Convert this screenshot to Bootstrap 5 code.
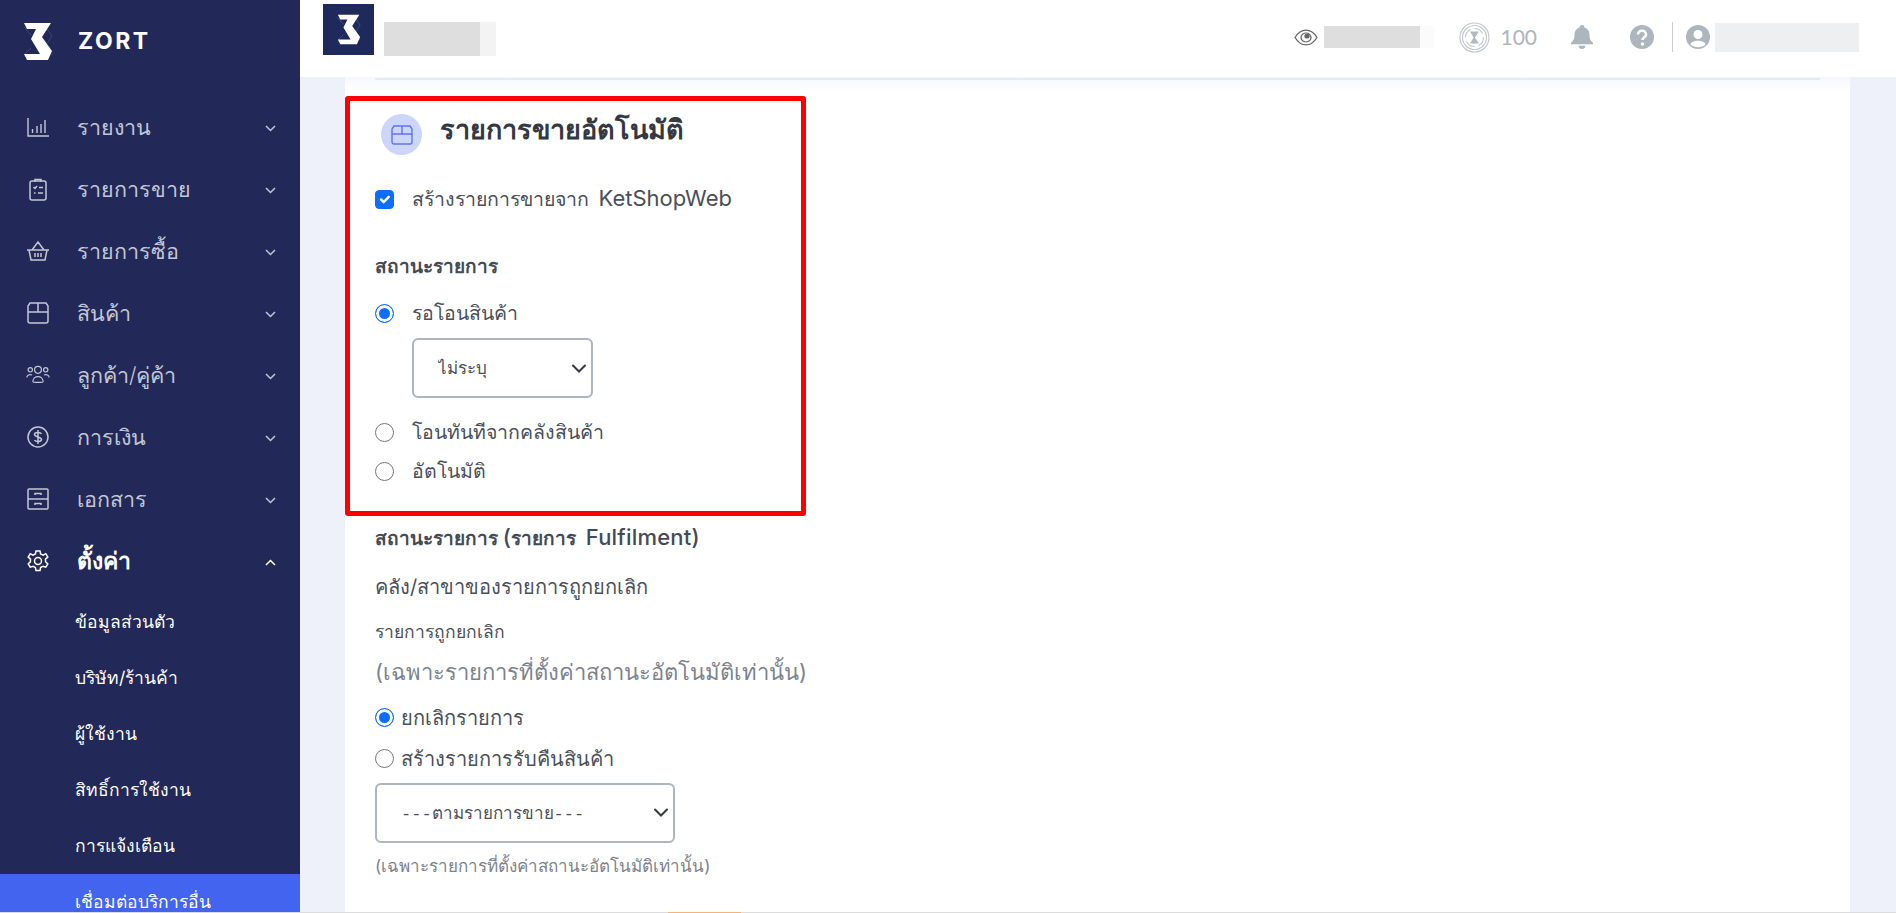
<!DOCTYPE html>
<html lang="th">
<head>
<meta charset="utf-8">
<title>ZORT</title>
<link href="https://cdn.jsdelivr.net/npm/bootstrap@5.3.0/dist/css/bootstrap.min.css" rel="stylesheet">
<style>
html,body{height:100%;overflow:hidden}
body{background:#eef1f9;font-family:"Inter","Noto Sans",sans-serif;color:#3e4450;font-size:19px}
.shell{height:912px}
.side{width:300px;background:#222858;color:#c3c7d4;flex:none;overflow:hidden;height:912px}
.brand{height:77px;padding:6px 0 0 23px;gap:25px;flex:none}
.brand-name{font-family:"Inter",sans-serif;font-weight:700;font-size:23px;letter-spacing:2.5px;color:#fff}
.menu-list{margin-top:19px;flex:none}
.menu-row{height:62px;padding:0 24px 0 26px;color:#c3c7d4;font-size:21.5px;font-weight:300;text-decoration:none}
.menu-row svg.mi{width:24px;height:24px;flex:none;margin-right:27px}
.menu-row .chev{margin:3px 0 0 auto;width:11px;height:7px}
.menu-row.open{color:#fff;font-weight:600;font-size:23px;margin-bottom:2px}
.sub-row{height:56px;padding-left:75px;color:#fff;font-size:17.5px;text-decoration:none;display:flex;align-items:center}
.sub-row.cur{background:#4364ef}
.main-col{min-width:0}
.topbar{height:77px;background:#fff;padding-left:23px;padding-right:37px;flex:none}
.mini-logo{width:51px;height:51px;background:#1f2a5c;margin-top:-19px;flex:none}
.blur-a{width:96px;height:34px;background:#dedede;margin-left:10px;box-shadow:16px 0 0 #f3f3f3}
.top-r{color:#adb5bd;font-family:"Lato",sans-serif;font-size:21px;padding-bottom:3px}
.blur-b{width:96px;height:22px;background:#dedede;margin-left:6px;margin-right:39px;box-shadow:14px 0 0 #fbfbfb}
.blur-c{width:144px;height:29px;background:#eeeff0;margin-left:5px}
.vbar{width:1px;height:30px;background:#c9ccd1;margin:0 13px 0 18px}
.sheet{margin:0 46px 0 45px;background:linear-gradient(#f6f7fd,#fff 14px);flex:1;padding:0 0 0 30px;overflow:hidden}
.top-rule{height:2px;background:#e6e8f2;margin:1px 30px 0 0}
.hl-box{border:5px solid #f00;border-radius:3px;width:461px;height:420px;margin:16px 0 0 -30px;padding:13px 0 0 25px;background:#fff}
.ico-dot{width:41px;height:41px;background:#ccd6fb;border-radius:50%;margin:0 18px 0 6px;flex:none}
.ttl{font-size:27px;font-weight:700;color:#333842;line-height:1;padding-bottom:10px}
.form-check-input.chk{width:19px;height:19px;margin:0 18px 0 0;flex:none;border-color:#777;border-radius:4px}
.form-check-input.chk:checked{border-color:#0d6efd}
.form-check-input.chk-radio{border-radius:50%}
.form-check-input.chk-radio:checked{background-image:none;background-color:#0d6efd;box-shadow:inset 0 0 0 3px #fff}
.form-check-input.tight{margin-right:7px}
.lbl{font-size:19.5px;color:#4a4f59}
.lbl-w{font-size:20px}
.lat{font-size:22px;line-height:1;margin-left:4px}
.lat-p{font-size:22px;line-height:1;font-weight:500}
.sect{font-size:19px;font-weight:600;color:#454a55}
.sect .lat{font-weight:500;margin-left:5px;letter-spacing:.2px}
.sel{font-size:17px;height:60px;border:2px solid #adb5bd;border-radius:6px;padding:4px 0 0 24px;color:#4a4f59;background-color:#fff;font-family:"Liberation Mono",monospace;background-image:url("data:image/svg+xml,%3csvg xmlns='http://www.w3.org/2000/svg' viewBox='0 0 14 9'%3e%3cpath fill='none' stroke='%23343a40' stroke-width='2' stroke-linecap='round' d='M1 1.500l6 6 6-6'/%3e%3c/svg%3e");background-position:right 5px center;background-size:14px 9px}
.sel-a{width:181px;margin:0 0 0 37px}
.sel-b{width:300px}
.gr-lg{font-size:22px;color:#7c828c}
.gr-sm{font-size:17px;color:#7c828c}
.dk{color:#4a4f59;font-size:17.500px}
.page-strip{height:1px;background:#dcdcdc}
.strip-hot{width:73px;height:1px;background:#f5b57a;margin-left:668px}
</style>
</head>
<body>
<div class="d-flex shell">
  <nav class="side d-flex flex-column">
    <div class="brand d-flex align-items-center">
      <svg width="30" height="39" viewBox="0 0 30 39"><path d="M21 2l8 12-6 9 6 10M8 26l-7 7M8 13L1 5" stroke="#3c4477" fill="none"/><path d="M1 1h27l-9 14 10 14-4 9H4l-3-6h16l-9-15 5-10H4z" fill="#fff"/></svg>
      <span class="brand-name">ZORT</span>
    </div>
    <div class="menu-list">
      <a class="menu-row d-flex align-items-center" href="#"><svg class="mi" viewBox="0 0 24 24" fill="none" stroke="#c3c7d4" stroke-width="1.4"><path d="M2 3v18h21M6.500 18v-4M11 18v-7M15 18v-9M19 18V5"/></svg>รายงาน<svg class="chev" viewBox="0 0 11 7" fill="none" stroke="#c3c7d4" stroke-width="1.5"><path d="M1 1l4.500 4.500L10 1"/></svg></a>
      <a class="menu-row d-flex align-items-center" href="#"><svg class="mi" viewBox="0 0 24 24" fill="none" stroke="#c3c7d4" stroke-width="1.5"><rect x="4" y="4" width="16" height="19" rx="2"/><path d="M9 5V2.500h6V5M7.500 10l1.500 1.500 2-2.500M13 10.500h4M8 16h1.500M12 16h5"/></svg>รายการขาย<svg class="chev" viewBox="0 0 11 7" fill="none" stroke="#c3c7d4" stroke-width="1.5"><path d="M1 1l4.500 4.500L10 1"/></svg></a>
      <a class="menu-row d-flex align-items-center" href="#"><svg class="mi" viewBox="0 0 24 24" fill="none" stroke="#c3c7d4" stroke-width="1.5"><path d="M1 11h22M3 11l2 10h14l2-10M6 11l6-8 6 8M9 14v4M12 14v4M15 14v4"/></svg>รายการซื้อ<svg class="chev" viewBox="0 0 11 7" fill="none" stroke="#c3c7d4" stroke-width="1.5"><path d="M1 1l4.500 4.500L10 1"/></svg></a>
      <a class="menu-row d-flex align-items-center" href="#"><svg class="mi" viewBox="0 0 24 24" fill="none" stroke="#c3c7d4" stroke-width="1.500"><path d="M2 11V5l2-3h16l2 3v15a2 2 0 0 1-2 2H4a2 2 0 0 1-2-2zM2 11h20M12 2v9"/></svg>สินค้า<svg class="chev" viewBox="0 0 11 7" fill="none" stroke="#c3c7d4" stroke-width="1.5"><path d="M1 1l4.500 4.500L10 1"/></svg></a>
      <a class="menu-row d-flex align-items-center" href="#"><svg class="mi" viewBox="0 0 28 24" fill="none" stroke="#c3c7d4" stroke-width="1.4"><circle cx="14" cy="6" r="4"/><circle cx="5" cy="6" r="2.500"/><circle cx="23" cy="6" r="2.500"/><path d="M8 20c0-8 12-8 12 0 0 1-12 1-12 0zM1 15c0-3 3-4 6-3M27 15c0-3-3-4-6-3"/></svg>ลูกค้า/คู่ค้า<svg class="chev" viewBox="0 0 11 7" fill="none" stroke="#c3c7d4" stroke-width="1.5"><path d="M1 1l4.500 4.500L10 1"/></svg></a>
      <a class="menu-row d-flex align-items-center" href="#"><svg class="mi" viewBox="0 0 24 24" fill="none" stroke="#c3c7d4" stroke-width="1.500"><circle cx="12" cy="12" r="10"/><path d="M15.500 9c-1-2-7-2-7 .5s7 2.500 7 5-6 2.500-7 .5M12 5v14"/></svg>การเงิน<svg class="chev" viewBox="0 0 11 7" fill="none" stroke="#c3c7d4" stroke-width="1.5"><path d="M1 1l4.500 4.500L10 1"/></svg></a>
      <a class="menu-row d-flex align-items-center" href="#"><svg class="mi" viewBox="0 0 24 24" fill="none" stroke="#c3c7d4" stroke-width="1.500"><rect x="2" y="2" width="20" height="20" rx="1"/><path d="M2 12h20M9 8V6.500h6V8M9 18v-1.500h6V18"/></svg>เอกสาร<svg class="chev" viewBox="0 0 11 7" fill="none" stroke="#c3c7d4" stroke-width="1.5"><path d="M1 1l4.500 4.500L10 1"/></svg></a>
      <a class="menu-row open d-flex align-items-center" href="#"><svg class="mi" viewBox="0 0 24 24" fill="none" stroke="#fff" stroke-width="1.500"><circle cx="12" cy="12" r="3.500"/><path d="M10 2h4l.6 3 2.500 1.200 2.700-1.500 2 3.400-2.300 2 .1 2.800 2.200 1.900-2 3.400-2.800-1-2.400 1.400-.6 3h-4l-.6-3-2.400-1.400-2.800 1-2-3.400 2.200-1.900.1-2.800-2.300-2 2-3.400 2.700 1.500L9.400 5z"/></svg>ตั้งค่า<svg class="chev" viewBox="0 0 11 7" fill="none" stroke="#fff" stroke-width="1.500"><path d="M1 6l4.500-4.500L10 6"/></svg></a>
      <a class="sub-row" href="#">ข้อมูลส่วนตัว</a>
      <a class="sub-row" href="#">บริษัท/ร้านค้า</a>
      <a class="sub-row" href="#">ผู้ใช้งาน</a>
      <a class="sub-row" href="#">สิทธิ์การใช้งาน</a>
      <a class="sub-row" href="#">การแจ้งเตือน</a>
      <a class="sub-row cur" href="#">เชื่อมต่อบริการอื่น</a>
    </div>
  </nav>
  <div class="main-col flex-grow-1 d-flex flex-column">
    <header class="topbar d-flex align-items-center">
      <div class="mini-logo d-flex align-items-center justify-content-center">
        <svg width="24" height="31" viewBox="0 0 30 39"><path d="M21 2l8 12-6 9 6 10M8 26l-7 7M8 13L1 5" stroke="#48508a" fill="none"/><path d="M1 1h27l-9 14 10 14-4 9H4l-3-6h16l-9-15 5-10H4z" fill="#fff"/></svg>
      </div>
      <div class="blur-a"></div>
      <div class="top-r ms-auto d-flex align-items-center">
        <svg width="24" height="17" viewBox="0 0 24 19" fill="none" stroke="#666" stroke-width="1.300" preserveAspectRatio="none"><path d="M1 9.500c6-11 16-11 22 0-6 11-16 11-22 0z"/><circle cx="12" cy="9.500" r="5"/><circle cx="13" cy="8" r="2" fill="#666"/></svg>
        <div class="blur-b"></div>
        <svg width="31" height="31" viewBox="0 0 31 31" fill="none" stroke="#c4c8cc" stroke-width="1.200"><circle cx="15.500" cy="15.500" r="14.500"/><circle cx="15.500" cy="15.500" r="12"/><circle cx="15.500" cy="15.500" r="9" stroke-dasharray="10 4"/><path d="M11 9.500h9l-4 6 4 6h-9l3.500-6z" fill="#b3bac1" stroke="none"/></svg>
        <span style="margin-left:10px">100</span>
        <svg style="margin-left:34px" width="22" height="25" viewBox="0 0 19 24" fill="#adb5bd" preserveAspectRatio="none"><path d="M9.500 0a2 2 0 0 1 2 2.500c3 1 4.500 3.500 4.500 7 0 4 1 5.500 3 7.500v1.500H0V17c2-2 3-3.500 3-7.500 0-3.500 1.500-6 4.500-7a2 2 0 0 1 2-2.500zM6.500 20h6a3 3 0 0 1-6 0z"/></svg>
        <svg style="margin-left:37px" width="24" height="24" viewBox="0 0 24 24"><circle cx="12" cy="12" r="12" fill="#adb5bd"/><path d="M8 9.500c0-5 8-5 8 0 0 3-3.500 2.500-3.500 5.500" fill="none" stroke="#fff" stroke-width="2.600"/><circle cx="12.500" cy="19" r="1.800" fill="#fff"/></svg>
        <div class="vbar"></div>
        <svg width="24" height="24" viewBox="0 0 24 24"><circle cx="12" cy="12" r="12" fill="#adb5bd"/><circle cx="12" cy="9.500" r="4.500" fill="#fff"/><path d="M4.500 19.500c1-5 14-5 15 0-3.500 3.500-11.500 3.500-15 0z" fill="#fff"/></svg>
        <div class="blur-c"></div>
      </div>
    </header>
    <main class="sheet">
      <div class="top-rule"></div>
      <div class="hl-box">
        <div class="d-flex align-items-center">
          <span class="ico-dot d-flex align-items-center justify-content-center"><svg width="22" height="20" viewBox="0 0 22 20" fill="none" stroke="#5f74e8" stroke-width="1.400"><path d="M1 9V4l2-3h16l2 3v13a2 2 0 0 1-2 2H3a2 2 0 0 1-2-2zM1 9h20M11 1v8"/></svg></span>
          <span class="ttl">รายการขายอัตโนมัติ</span>
        </div>
        <div class="d-flex align-items-center" style="margin-top:30px">
          <input class="form-check-input chk" type="checkbox" checked id="c1"><label class="lbl" for="c1">สร้างรายการขายจาก <span class="lat">KetShopWeb</span></label>
        </div>
        <div class="sect" style="margin-top:39px">สถานะรายการ</div>
        <div class="d-flex align-items-center" style="margin-top:17px">
          <input class="form-check-input chk chk-radio" type="radio" name="r1" checked id="r1"><label class="lbl" for="r1">รอโอนสินค้า</label>
        </div>
        <select class="form-select sel sel-a" style="margin-top:10px"><option>ไม่ระบุ</option></select>
        <div class="d-flex align-items-center" style="margin-top:20px">
          <input class="form-check-input chk chk-radio" type="radio" name="r1" id="r2"><label class="lbl" for="r2">โอนทันทีจากคลังสินค้า</label>
        </div>
        <div class="d-flex align-items-center" style="margin-top:10px">
          <input class="form-check-input chk chk-radio" type="radio" name="r1" id="r3"><label class="lbl" for="r3">อัตโนมัติ</label>
        </div>
      </div>
      <div class="sect" style="margin-top:9px">สถานะรายการ <span class="lat-p">(</span>รายการ <span class="lat">Fulfilment)</span></div>
      <div class="lbl lbl-w" style="margin-top:18px">คลัง/สาขาของรายการถูกยกเลิก</div>
      <div class="dk" style="margin-top:17px">รายการถูกยกเลิก</div>
      <div class="gr-lg" style="margin-top:11px">(เฉพาะรายการที่ตั้งค่าสถานะอัตโนมัติเท่านั้น)</div>
      <div class="d-flex align-items-center" style="margin-top:14px">
        <input class="form-check-input chk chk-radio tight" type="radio" name="r4" checked id="r4"><label class="lbl lbl-w" for="r4">ยกเลิกรายการ</label>
      </div>
      <div class="d-flex align-items-center" style="margin-top:11px">
        <input class="form-check-input chk chk-radio tight" type="radio" name="r4" id="r5"><label class="lbl lbl-w" for="r5">สร้างรายการรับคืนสินค้า</label>
      </div>
      <select class="form-select sel sel-b" style="margin-top:9px"><option>---ตามรายการขาย---</option></select>
      <div class="gr-sm" style="margin-top:11px">(เฉพาะรายการที่ตั้งค่าสถานะอัตโนมัติเท่านั้น)</div>
    </main>
  </div>
</div>
<div class="page-strip"><div class="strip-hot"></div></div>
</body>
</html>
